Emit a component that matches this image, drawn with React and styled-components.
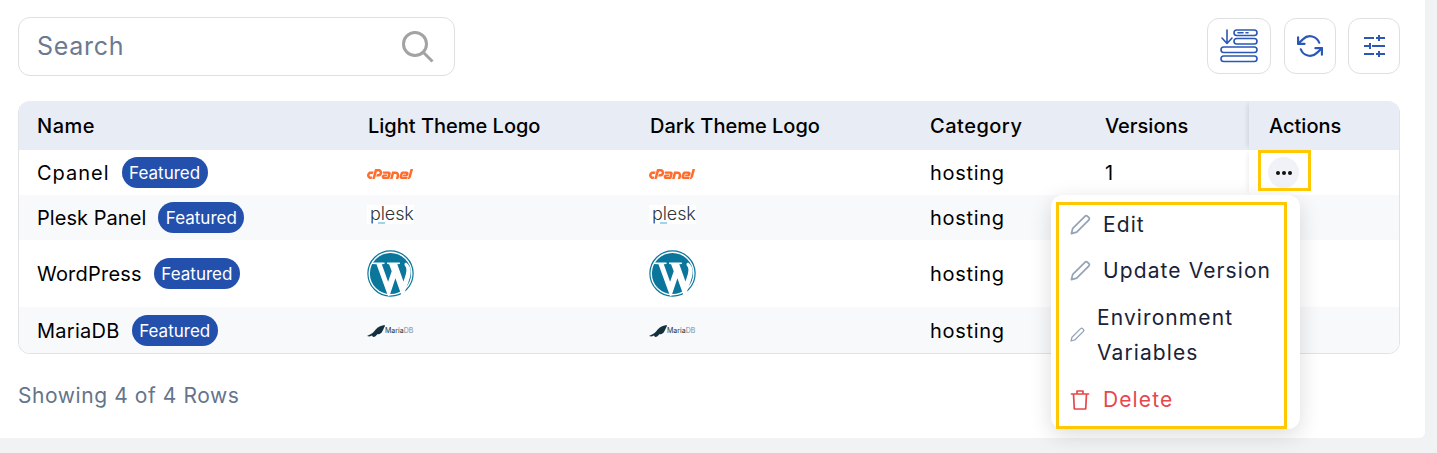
import React from "react";
import styled, { createGlobalStyle } from "styled-components";
import { SiCpanel } from "react-icons/si";
import { FiRefreshCcw } from "react-icons/fi";

const Global = createGlobalStyle`
  html, body { margin: 0; padding: 0; background: #f1f2f4; }
  body { font-family: "Inter", "Liberation Sans", sans-serif; }
  * { box-sizing: border-box; }
`;

const Page = styled.div`
  position: relative;
  width: 1437px;
  height: 453px;
  overflow: hidden;
`;
const Card = styled.div`
  width: 1425px;
  height: 438px;
  background: #fff;
  border-bottom-right-radius: 6px;
  padding: 17px 25px 0 18px;
`;
const Toolbar = styled.div`
  display: flex;
  justify-content: space-between;
  align-items: flex-start;
  height: 84px;
`;
const SearchBox = styled.div`
  width: 437px;
  height: 59px;
  border: 1px solid #dedfe1;
  border-radius: 12px;
  display: flex;
  align-items: center;
  justify-content: space-between;
  padding: 0 20px 0 18px;
  color: #6b7a90;
  font-size: 25px;
  letter-spacing: 0.7px;
  span {
    margin-top: -2px;
  }
`;
const Tools = styled.div`
  display: flex;
  padding-top: 1px;
`;
const ToolButton = styled.div`
  width: ${(p) => p.$w}px;
  height: 56px;
  margin-left: ${(p) => p.$ml || 0}px;
  border: 1px solid #dedfe1;
  border-radius: 12px;
  display: flex;
  align-items: center;
  justify-content: center;
  color: #2b57b5;
`;
const Table = styled.div`
  width: 1382px;
  height: 253px;
  border: 1px solid #e2e3e6;
  border-top: 0;
  border-radius: 12px;
  overflow: hidden;
  font-size: 20px;
  color: #000;
`;
const Row = styled.div`
  display: grid;
  grid-template-columns: 329px 282px 280px 175px 164px 151px;
  height: ${(p) => p.$h}px;
  background: ${(p) => p.$bg || "#fff"};
  align-items: center;
`;
const HeadCell = styled.div`
  padding-left: ${(p) => (p.$first ? 18 : 20)}px;
  font-weight: 500;
  font-size: 20px;
  letter-spacing: ${(p) => p.$track || 0}px;
  height: 100%;
  display: flex;
  align-items: center;
`;
const StickyHead = styled(HeadCell)`
  box-shadow: -4px 0 5px -3px rgba(0, 0, 0, 0.12);
`;
const Cell = styled.div`
  padding-left: ${(p) => (p.$first ? 18 : 20)}px;
  height: 100%;
  display: flex;
  align-items: center;
  gap: 12px;
`;
const Name = styled.span`
  letter-spacing: ${(p) => p.$track}px;
`;
const TextCell = styled(Cell)`
  letter-spacing: 0.7px;
`;
const StickyCell = styled(Cell)`
  padding-left: 19px;
  background: ${(p) => p.$bg || "#fff"};
  box-shadow: -4px 0 5px -3px rgba(0, 0, 0, 0.08);
`;
const Badge = styled.span`
  background: #2450ad;
  color: #fff;
  border-radius: 16px;
  height: 31px;
  width: 86px;
  display: inline-flex;
  align-items: center;
  justify-content: center;
  font-size: 17px;
`;
const Dots = styled.div`
  width: 31px;
  height: 31px;
  border-radius: 50%;
  background: #f0f2f7;
  display: flex;
  align-items: center;
  justify-content: center;
  gap: 2px;
`;
const Dot = styled.i`
  width: 4px;
  height: 4px;
  border-radius: 50%;
  background: #111;
`;
const LogoSlot = styled.span`
  display: inline-flex;
  margin-left: -1px;
`;
const CpanelSlot = styled(LogoSlot)`
  height: 14px;
  margin-top: 3px;
  align-items: center;
`;
const Plesk = styled.span`
  position: relative;
  display: block;
  width: 47px;
  height: 19px;
  margin-top: -7px;
  background: #fff;
  font-size: 18px;
  font-weight: 300;
  line-height: 17px;
  letter-spacing: -0.1px;
  color: #2f353c;
  padding-left: 3px;
  &::after {
    content: "";
    position: absolute;
    left: 11px;
    bottom: 0;
    width: 7px;
    height: 2px;
    background: #9fd4ee;
  }
`;
const MariaLogo = styled.span`
  display: inline-flex;
  align-items: center;
  font-size: 7px;
  letter-spacing: 0;
  color: #1d3340;
  b {
    font-weight: 400;
    color: #7f8790;
  }
`;
const Footer = styled.div`
  margin-top: 29px;
  font-size: 21px;
  letter-spacing: 0.58px;
  color: #64748b;
`;
const Menu = styled.div`
  position: absolute;
  left: 1051px;
  top: 195px;
  width: 249px;
  height: 234px;
  background: #fff;
  border-radius: 12px;
  box-shadow: 0 6px 22px rgba(0, 0, 0, 0.14);
`;
const Highlight = styled.div`
  position: absolute;
  border: 3px solid #ffc800;
  left: ${(p) => p.$l}px;
  top: ${(p) => p.$t}px;
  width: ${(p) => p.$w}px;
  height: ${(p) => p.$h}px;
  pointer-events: none;
`;
const MenuList = styled.div`
  padding: 6px 0 0 18px;
  font-size: 21px;
  letter-spacing: 1.1px;
  color: #1a2238;
`;
const MenuItem = styled.div`
  display: flex;
  align-items: center;
  height: ${(p) => p.$h}px;
  gap: ${(p) => p.$gap}px;
  color: ${(p) => (p.$danger ? "#e5484d" : "inherit")};
  line-height: 35px;
`;
const IconBox = styled.span`
  display: flex;
  width: 22px;
  padding-left: 1px;
  justify-content: flex-start;
  color: ${(p) => (p.$danger ? "#e5484d" : "#94a3b8")};
`;

const Pencil = ({ s = 21 }) => (
  <svg width={s} height={s} viewBox="0 0 22 22" fill="none" stroke="currentColor" strokeWidth="1.8" strokeLinejoin="round">
    <path d="M1.500 20.500l1.400-5.500L15.600 2.400a2 2 0 0 1 2.800 0l1.200 1.200a2 2 0 0 1 0 2.800L7 19z" />
  </svg>
);
const SortIcon = () => (
  <svg width="38" height="34" viewBox="0 0 38 34" fill="none" stroke="currentColor" strokeWidth="1.6" strokeLinecap="round" strokeLinejoin="round">
    <rect x="14" y="1" width="23" height="5.5" rx="2.7" />
    <path d="M18 3.8h5M26 3.8h2" />
    <rect x="14" y="9.5" width="23" height="5.5" rx="2.7" />
    <rect x="1" y="18" width="36" height="5.5" rx="2.7" />
    <rect x="1" y="27" width="36" height="5.5" rx="2.7" />
    <path d="M7 1v13M2 9l5 5.5L12 9" />
  </svg>
);
const SlidersIcon = () => (
  <svg width="22" height="24" viewBox="0 0 22 24" fill="none" stroke="currentColor" strokeWidth="2">
    <path d="M1 4h10M13 4h9M1 12h5M9 12h13M1 20h10M13 20h9" />
    <path d="M16 1v6M7 9v6M16 17v6" />
  </svg>
);
const SearchIcon = () => (
  <svg width="33" height="33" viewBox="0 0 33 33" fill="none" stroke="#a3a3a3" strokeWidth="3">
    <circle cx="14" cy="14" r="11.5" />
    <path d="M22.5 22.5L31.5 31.5" />
  </svg>
);
const Trash = () => (
  <svg width="20" height="22" viewBox="0 0 20 22" fill="none" stroke="currentColor" strokeWidth="1.7" strokeLinecap="round" strokeLinejoin="round">
    <path d="M1.5 5h17M7 5V2h6v3M3.5 5l.8 15h11.4l.8-15" />
  </svg>
);
const WordPressMark = () => (
  <svg width="47" height="47" viewBox="0 0 47 47">
    <circle cx="23.5" cy="23.5" r="22.6" fill="none" stroke="#0a769c" strokeWidth="1.2" />
    <circle cx="23.5" cy="23.5" r="20.6" fill="#0a769c" />
    <path
      fill="#fff"
      d="M5 12.500h12.500v1.400l-2.700.3 6.300 17.600 3.600-10.600-2.600-7-2-.3v-1.400h12.800v1.400l-2.600.3 6.200 17.400 2.200-7.200c1.400-4.600.6-7-.8-8.600-.8-1-.6-3 1.200-3.200 3 2 4.600 5.400 4.600 9 0 4-1 6.800-2.600 11.400l-4.600 12.500-1.800.5-6.300-17.800-5.800 17.600-1.600.3L9.500 14.200l-4.500-.3z"
    />
  </svg>
);
const Seal = () => (
  <svg width="18" height="12" viewBox="0 0 18 12" fill="#12303e">
    <path d="M0 11l4-2c3-1 3.600-4 6.500-6.200 2-1.400 4.500-2.300 7-2.800l.5 1c-1 1.400-1.800 4.400-3.300 6.400-1 1.400-3 1.800-4.500 1.800-1 1.400-2 2.800-4.200 2.800l-1-1.400-2.500 1z" />
  </svg>
);

const logos = {
  cpanel: <CpanelSlot><SiCpanel size={46} color="#ff6c2c" /></CpanelSlot>,
  plesk: <LogoSlot><Plesk>plesk</Plesk></LogoSlot>,
  wp: <LogoSlot><WordPressMark /></LogoSlot>,
  maria: <LogoSlot><MariaLogo><Seal />Maria<b>DB</b></MariaLogo></LogoSlot>,
};

const rows = [
  { name: "Cpanel", track: 1, logo: "cpanel", h: 45, v: "1" },
  { name: "Plesk Panel", track: 0.05, logo: "plesk", h: 45, bg: "#f8f9fb" },
  { name: "WordPress", track: 0.22, logo: "wp", h: 67 },
  { name: "MariaDB", track: 0.28, logo: "maria", h: 47, bg: "#f8f9fb" },
];

export default function App() {
  return (
    <Page>
      <Global />
      <Card>
        <Toolbar>
          <SearchBox>
            <span>Search</span>
            <SearchIcon />
          </SearchBox>
          <Tools>
            <ToolButton $w={64}><SortIcon /></ToolButton>
            <ToolButton $w={52} $ml={13}><FiRefreshCcw size={26} strokeWidth={2} /></ToolButton>
            <ToolButton $w={52} $ml={12}><SlidersIcon /></ToolButton>
          </Tools>
        </Toolbar>
        <Table>
          <Row $h={49} $bg="#e8ecf5">
            <HeadCell $first $track={0.5}>Name</HeadCell>
            <HeadCell>Light Theme Logo</HeadCell>
            <HeadCell>Dark Theme Logo</HeadCell>
            <HeadCell $track={0.5}>Category</HeadCell>
            <HeadCell>Versions</HeadCell>
            <StickyHead>Actions</StickyHead>
          </Row>
          {rows.map((r) => (
            <Row key={r.name} $h={r.h} $bg={r.bg}>
              <Cell $first>
                <Name $track={r.track}>{r.name}</Name>
                <Badge>Featured</Badge>
              </Cell>
              <Cell>{logos[r.logo]}</Cell>
              <Cell>{logos[r.logo]}</Cell>
              <TextCell>hosting</TextCell>
              <TextCell>{r.v}</TextCell>
              <StickyCell $bg={r.bg}>
                {r.v && <Dots><Dot /><Dot /><Dot /></Dots>}
              </StickyCell>
            </Row>
          ))}
        </Table>
        <Footer>Showing 4 of 4 Rows</Footer>
      </Card>
      <Menu>
        <MenuList>
          <MenuItem $h={46} $gap={12}><IconBox><Pencil /></IconBox>Edit</MenuItem>
          <MenuItem $h={46} $gap={12}><IconBox><Pencil /></IconBox>Update Version</MenuItem>
          <MenuItem $h={83} $gap={6}><IconBox><Pencil s={15} /></IconBox><span>Environment<br />Variables</span></MenuItem>
          <MenuItem $h={47} $gap={12} $danger><IconBox $danger><Trash /></IconBox>Delete</MenuItem>
        </MenuList>
      </Menu>
      <Highlight $l={1258} $t={150} $w={53} $h={41} />
      <Highlight $l={1056} $t={202} $w={231} $h={227} />
    </Page>
  );
}
